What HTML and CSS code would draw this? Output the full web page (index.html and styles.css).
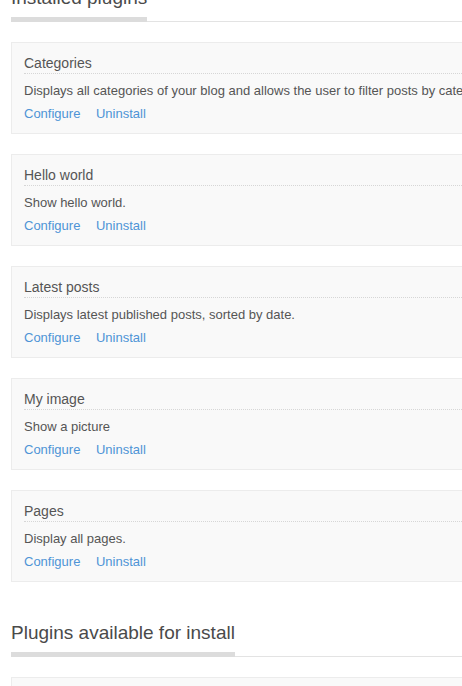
FILE: index.html
```html
<!DOCTYPE html>
<html lang="en">
<head>
<meta charset="utf-8">
<title>Plugins</title>
<link rel="stylesheet" href="styles.css">
</head>
<body>
<div class="page">
  <h2 class="section-title"><span>Installed plugins</span></h2>

  <div class="plugin">
    <div class="plugin-name">Categories</div>
    <p class="plugin-desc">Displays all categories of your blog and allows the user to filter posts by category.</p>
    <div class="plugin-actions"><a href="#">Configure</a><a href="#">Uninstall</a></div>
  </div>

  <div class="plugin">
    <div class="plugin-name">Hello world</div>
    <p class="plugin-desc">Show hello world.</p>
    <div class="plugin-actions"><a href="#">Configure</a><a href="#">Uninstall</a></div>
  </div>

  <div class="plugin">
    <div class="plugin-name">Latest posts</div>
    <p class="plugin-desc">Displays latest published posts, sorted by date.</p>
    <div class="plugin-actions"><a href="#">Configure</a><a href="#">Uninstall</a></div>
  </div>

  <div class="plugin">
    <div class="plugin-name">My image</div>
    <p class="plugin-desc">Show a picture</p>
    <div class="plugin-actions"><a href="#">Configure</a><a href="#">Uninstall</a></div>
  </div>

  <div class="plugin">
    <div class="plugin-name">Pages</div>
    <p class="plugin-desc">Display all pages.</p>
    <div class="plugin-actions"><a href="#">Configure</a><a href="#">Uninstall</a></div>
  </div>

  <h2 class="section-title"><span>Plugins available for install</span></h2>

  <div class="plugin">
    <div class="plugin-name">Archives</div>
    <p class="plugin-desc">Displays an archive of all posts grouped by month.</p>
    <div class="plugin-actions"><a href="#">Install</a></div>
  </div>
</div>
</body>
</html>
```

FILE: styles.css
```css
html, body {
  margin: 0;
  padding: 0;
  overflow: hidden;
  background: #fff;
}

body {
  font-family: "Liberation Sans", Arial, Helvetica, sans-serif;
  color: #555;
}

/* page is scrolled a little past the top heading */
.page {
  width: 760px;
  margin-top: -14px;
  padding-left: 11px;
}

.section-title {
  font-size: 19px;
  font-weight: normal;
  line-height: 24px;
  color: #4a4a4a;
  margin: 39px 0 20px;
  border-bottom: 1px solid #e3e3e3;
}

.section-title:first-child {
  margin-top: 0;
}

.section-title span {
  display: inline-block;
  padding-bottom: 7px;
  border-bottom: 5px solid #dcdcdc;
  margin-bottom: -1px;
}

.plugin {
  background: #f9f9f9;
  border: 1px solid #ececec;
  padding: 10px 12px 10px;
  margin-bottom: 20px;
}

.plugin-name {
  font-size: 14px;
  line-height: 20px;
  color: #555;
  border-bottom: 1px dotted #d6d6d6;
}

.plugin-desc {
  margin: 8px 0 0;
  font-size: 13px;
  line-height: 18px;
  color: #555;
}

.plugin-actions {
  margin-top: 5px;
  display: flex;
  gap: 15.6px;
  font-size: 13px;
  line-height: 18px;
}

.plugin-actions a {
  color: #4e94d6;
  text-decoration: none;
}
```
